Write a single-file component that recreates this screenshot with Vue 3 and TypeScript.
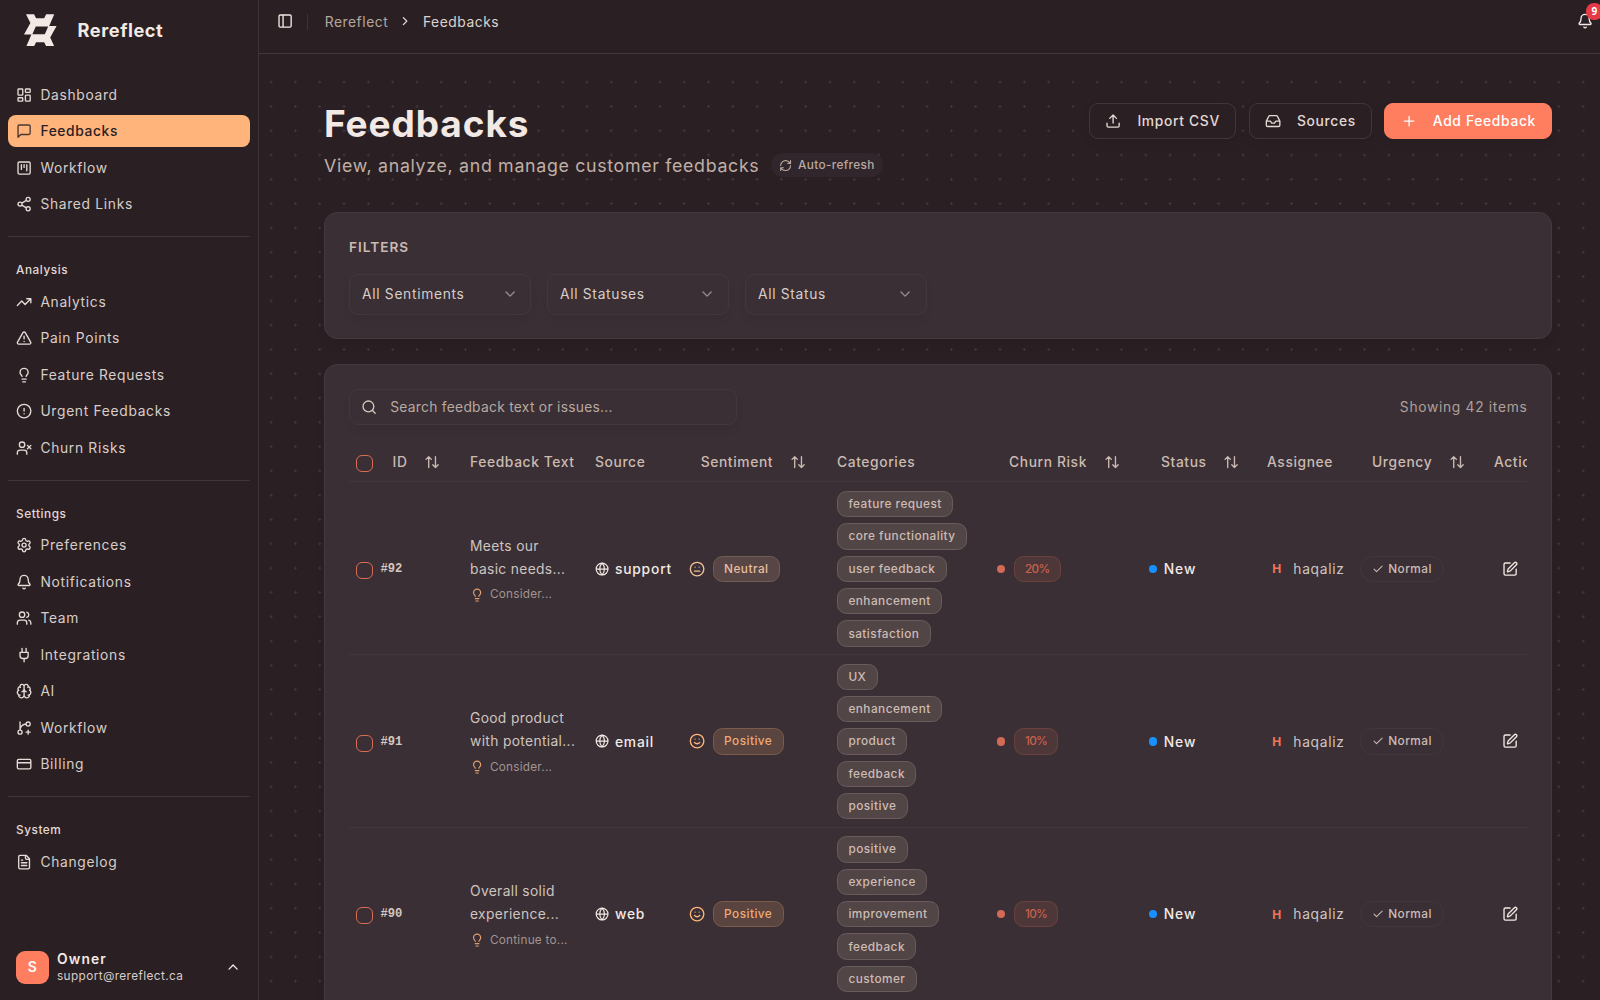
<template>
  <div class="app">
    <aside class="sidebar">
      <div class="brand">
        <svg class="brand-logo" viewBox="0 0 97 97">
          <path
            fill-rule="evenodd"
            d="M6 1h24l6 12h24l6-12h24L75 36h22L78 70l12 26H66l-6-12H36l-6 12H7l15-35H0L19 27ZM35 37 25 60h37l10-23Z"
          />
        </svg>
        <span class="brand-name">Rereflect</span>
      </div>

      <nav class="nav">
        <section v-for="group in navGroups" :key="group.title" class="nav-group">
          <h2 v-if="group.title" class="nav-title">{{ group.title }}</h2>
          <a
            v-for="item in group.items"
            :key="item.label"
            class="nav-item"
            :class="{ active: item.active }"
          >
            <svg class="icon" viewBox="0 0 24 24"><path :d="icons[item.icon]" /></svg>
            <span>{{ item.label }}</span>
          </a>
        </section>
      </nav>

      <div class="user">
        <div class="user-avatar">S</div>
        <div class="user-info">
          <div class="user-name">Owner</div>
          <div class="user-email">support@rereflect.ca</div>
        </div>
        <svg class="icon" viewBox="0 0 24 24"><path :d="icons.chevronUp" /></svg>
      </div>
    </aside>

    <div class="main">
      <header class="topbar">
        <svg class="icon" viewBox="0 0 24 24"><path :d="icons.panel" /></svg>
        <span class="topbar-divider"></span>
        <span class="crumb muted">Rereflect</span>
        <svg class="icon crumb-sep" viewBox="0 0 24 24"><path :d="icons.chevronRight" /></svg>
        <span class="crumb">Feedbacks</span>
        <div class="bell">
          <svg class="icon" viewBox="0 0 24 24"><path :d="icons.bell" /></svg>
          <span class="bell-count">9</span>
        </div>
      </header>

      <main class="content">
        <div class="page-head">
          <div>
            <h1 class="page-title">Feedbacks</h1>
            <div class="page-sub">
              <p>View, analyze, and manage customer feedbacks</p>
              <span class="auto-refresh">
                <svg class="icon" viewBox="0 0 24 24"><path :d="icons.refresh" /></svg>
                <span>Auto-refresh</span>
              </span>
            </div>
          </div>
          <div class="page-actions">
            <button class="btn">
              <svg class="icon" viewBox="0 0 24 24"><path :d="icons.upload" /></svg>
              <span>Import CSV</span>
            </button>
            <button class="btn">
              <svg class="icon" viewBox="0 0 24 24"><path :d="icons.inbox" /></svg>
              <span>Sources</span>
            </button>
            <button class="btn btn-primary">
              <svg class="icon" viewBox="0 0 24 24"><path :d="icons.plus" /></svg>
              <span>Add Feedback</span>
            </button>
          </div>
        </div>

        <section class="card filters">
          <h3 class="filters-title">FILTERS</h3>
          <div class="filters-row">
            <button v-for="name in filters" :key="name" class="select">
              <span>{{ name }}</span>
              <svg class="icon" viewBox="0 0 24 24"><path :d="icons.chevronDown" /></svg>
            </button>
          </div>
        </section>

        <section class="card list">
          <div class="list-bar">
            <label class="search">
              <svg class="icon" viewBox="0 0 24 24"><path :d="icons.search" /></svg>
              <span>Search feedback text or issues...</span>
            </label>
            <span class="showing">Showing 42 items</span>
          </div>

          <div class="table">
            <div class="row head">
              <div class="cell"><span class="checkbox"></span></div>
              <div
                v-for="col in columns"
                :key="col.label"
                class="cell"
                :class="{ sortable: col.sort }"
              >
                <span>{{ col.label }}</span>
                <svg v-if="col.sort" class="icon" viewBox="0 0 24 24"><path :d="icons.sort" /></svg>
              </div>
            </div>

            <div v-for="row in rows" :key="row.id" class="row">
              <div class="cell"><span class="checkbox"></span></div>
              <div class="cell id">#{{ row.id }}</div>
              <div class="cell">
                <div class="feedback">
                  <div v-for="line in row.text" :key="line">{{ line }}</div>
                  <div class="hint">
                    <svg class="icon" viewBox="0 0 24 24"><path :d="icons.bulb" /></svg>
                    <span>{{ row.hint }}</span>
                  </div>
                </div>
              </div>
              <div class="cell source">
                <svg class="icon" viewBox="0 0 24 24"><path :d="icons.globe" /></svg>
                <span>{{ row.source }}</span>
              </div>
              <div class="cell sentiment" :class="row.sentiment.toLowerCase()">
                <svg class="icon" viewBox="0 0 24 24">
                  <path :d="row.sentiment === 'Positive' ? icons.smile : icons.meh" />
                </svg>
                <span class="badge">{{ row.sentiment }}</span>
              </div>
              <div class="cell tags">
                <span v-for="tag in row.tags" :key="tag" class="badge">{{ tag }}</span>
              </div>
              <div class="cell churn">
                <span class="dot"></span>
                <span class="badge">{{ row.churn }}%</span>
              </div>
              <div class="cell status">
                <span class="dot"></span>
                <span>New</span>
              </div>
              <div class="cell assignee">
                <span class="initial">H</span>
                <span>haqaliz</span>
              </div>
              <div class="cell urgency">
                <span class="badge">
                  <svg class="icon" viewBox="0 0 24 24"><path :d="icons.check" /></svg>
                  <span>Normal</span>
                </span>
              </div>
              <div class="cell actions">
                <svg class="icon" viewBox="0 0 24 24"><path :d="icons.edit" /></svg>
              </div>
            </div>
          </div>
        </section>
      </main>
    </div>
  </div>
</template>

<script setup lang="ts">
interface NavItem {
  label: string
  icon: string
  active?: boolean
}

interface NavGroup {
  title: string
  items: NavItem[]
}

interface FeedbackRow {
  id: number
  text: string[]
  hint: string
  source: string
  sentiment: 'Neutral' | 'Positive'
  tags: string[]
  churn: number
}

const icons: Record<string, string> = {
  dashboard:
    'M4 3h5a1 1 0 0 1 1 1v7a1 1 0 0 1-1 1H4a1 1 0 0 1-1-1V4a1 1 0 0 1 1-1ZM15 3h5a1 1 0 0 1 1 1v3a1 1 0 0 1-1 1h-5a1 1 0 0 1-1-1V4a1 1 0 0 1 1-1ZM15 12h5a1 1 0 0 1 1 1v7a1 1 0 0 1-1 1h-5a1 1 0 0 1-1-1v-7a1 1 0 0 1 1-1ZM4 16h5a1 1 0 0 1 1 1v3a1 1 0 0 1-1 1H4a1 1 0 0 1-1-1v-3a1 1 0 0 1 1-1Z',
  message: 'M21 15a2 2 0 0 1-2 2H7l-4 4V5a2 2 0 0 1 2-2h14a2 2 0 0 1 2 2z',
  kanban:
    'M5 3h14a2 2 0 0 1 2 2v14a2 2 0 0 1-2 2H5a2 2 0 0 1-2-2V5a2 2 0 0 1 2-2ZM8 7v7M12 7v4M16 7v9',
  share:
    'M21 5a3 3 0 1 1-6 0 3 3 0 0 1 6 0ZM9 12a3 3 0 1 1-6 0 3 3 0 0 1 6 0ZM21 19a3 3 0 1 1-6 0 3 3 0 0 1 6 0ZM8.59 13.51l6.83 3.98M15.41 6.51l-6.82 3.98',
  trending: 'M16 7h6v6M22 7l-8.5 8.5-5-5L2 17',
  warning:
    'm21.73 18-8-14a2 2 0 0 0-3.48 0l-8 14A2 2 0 0 0 4 21h16a2 2 0 0 0 1.73-3M12 9v4M12 17h.01',
  bulb: 'M15 14c.2-1 .7-1.7 1.5-2.5 1-.9 1.5-2.2 1.5-3.5A6 6 0 0 0 6 8c0 1 .2 2.2 1.5 3.5.7.7 1.3 1.5 1.5 2.5M9 18h6M10 22h4',
  alert: 'M22 12a10 10 0 1 1-20 0 10 10 0 0 1 20 0ZM12 8v4M12 16h.01',
  userX:
    'M16 21v-2a4 4 0 0 0-4-4H6a4 4 0 0 0-4 4v2M13 7a4 4 0 1 1-8 0 4 4 0 0 1 8 0ZM17 8l5 5M22 8l-5 5',
  settings:
    'M9.671 4.136a2.34 2.34 0 0 1 4.659 0 2.34 2.34 0 0 0 3.319 1.915 2.34 2.34 0 0 1 2.33 4.033 2.34 2.34 0 0 0 0 3.831 2.34 2.34 0 0 1-2.33 4.033 2.34 2.34 0 0 0-3.319 1.915 2.34 2.34 0 0 1-4.659 0 2.34 2.34 0 0 0-3.32-1.915 2.34 2.34 0 0 1-2.33-4.033 2.34 2.34 0 0 0 0-3.831A2.34 2.34 0 0 1 6.35 6.051a2.34 2.34 0 0 0 3.319-1.915M15 12a3 3 0 1 1-6 0 3 3 0 0 1 6 0Z',
  bell: 'M10.268 21a2 2 0 0 0 3.464 0M3.262 15.326A1 1 0 0 0 4 17h16a1 1 0 0 0 .74-1.673C19.41 13.956 18 12.499 18 8A6 6 0 0 0 6 8c0 4.499-1.411 5.956-2.738 7.326',
  users:
    'M16 21v-2a4 4 0 0 0-4-4H6a4 4 0 0 0-4 4v2M16 3.128a4 4 0 0 1 0 7.744M22 21v-2a4 4 0 0 0-3-3.87M13 7a4 4 0 1 1-8 0 4 4 0 0 1 8 0Z',
  plug: 'M12 22v-5M9 8V2M15 8V2M18 8v5a4 4 0 0 1-4 4h-4a4 4 0 0 1-4-4V8Z',
  brain:
    'M12 18V5M15 13a4.17 4.17 0 0 1-3-4 4.17 4.17 0 0 1-3 4M17.598 6.5A3 3 0 1 0 12 5a3 3 0 1 0-5.598 1.5M17.997 5.125a4 4 0 0 1 2.526 5.77M18 18a4 4 0 0 0 2-7.464M19.967 17.483A4 4 0 1 1 12 18a4 4 0 1 1-7.967-.517M6 18a4 4 0 0 1-2-7.464M6.003 5.125a4 4 0 0 0-2.526 5.77',
  branch:
    'M6 3v12M18 9a3 3 0 1 0 0-6 3 3 0 0 0 0 6zM6 21a3 3 0 1 0 0-6 3 3 0 0 0 0 6zM15 6a9 9 0 0 0-9 9M18 15v6M21 18h-6',
  card: 'M4 5h16a2 2 0 0 1 2 2v10a2 2 0 0 1-2 2H4a2 2 0 0 1-2-2V7a2 2 0 0 1 2-2ZM2 10h20',
  file: 'M15 2H6a2 2 0 0 0-2 2v16a2 2 0 0 0 2 2h12a2 2 0 0 0 2-2V7ZM14 2v4a2 2 0 0 0 2 2h4M10 9H8M16 13H8M16 17H8',
  panel: 'M5 3h14a2 2 0 0 1 2 2v14a2 2 0 0 1-2 2H5a2 2 0 0 1-2-2V5a2 2 0 0 1 2-2ZM9 3v18',
  upload: 'M12 3v12M17 8l-5-5-5 5M21 15v4a2 2 0 0 1-2 2H5a2 2 0 0 1-2-2v-4',
  inbox:
    'M22 12h-6l-2 3h-4l-2-3H2M5.45 5.11 2 12v6a2 2 0 0 0 2 2h16a2 2 0 0 0 2-2v-6l-3.45-6.89A2 2 0 0 0 16.76 4H7.24a2 2 0 0 0-1.79 1.11z',
  plus: 'M5 12h14M12 5v14',
  refresh:
    'M3 12a9 9 0 0 1 9-9 9.75 9.75 0 0 1 6.74 2.74L21 8M21 3v5h-5M21 12a9 9 0 0 1-9 9 9.75 9.75 0 0 1-6.74-2.74L3 16M8 16H3v5',
  search: 'M19 11a8 8 0 1 1-16 0 8 8 0 0 1 16 0ZM21 21l-4.34-4.34',
  sort: 'm21 16-4 4-4-4M17 20V4M3 8l4-4 4 4M7 4v16',
  globe:
    'M22 12a10 10 0 1 1-20 0 10 10 0 0 1 20 0ZM12 2a14.5 14.5 0 0 0 0 20 14.5 14.5 0 0 0 0-20M2 12h20',
  smile: 'M22 12a10 10 0 1 1-20 0 10 10 0 0 1 20 0ZM8 14s1.5 2 4 2 4-2 4-2M9 9h.01M15 9h.01',
  meh: 'M22 12a10 10 0 1 1-20 0 10 10 0 0 1 20 0ZM8 15h8M9 9h.01M15 9h.01',
  check: 'M20 6 9 17l-5-5',
  edit: 'M12 3H5a2 2 0 0 0-2 2v14a2 2 0 0 0 2 2h14a2 2 0 0 0 2-2v-7M18.375 2.625a1 1 0 0 1 3 3l-9.013 9.014a2 2 0 0 1-.853.505l-2.873.84a.5.5 0 0 1-.62-.62l.84-2.873a2 2 0 0 1 .506-.852z',
  chevronUp: 'm18 15-6-6-6 6',
  chevronDown: 'm6 9 6 6 6-6',
  chevronRight: 'm9 18 6-6-6-6',
}

const navGroups: NavGroup[] = [
  {
    title: '',
    items: [
      { label: 'Dashboard', icon: 'dashboard' },
      { label: 'Feedbacks', icon: 'message', active: true },
      { label: 'Workflow', icon: 'kanban' },
      { label: 'Shared Links', icon: 'share' },
    ],
  },
  {
    title: 'Analysis',
    items: [
      { label: 'Analytics', icon: 'trending' },
      { label: 'Pain Points', icon: 'warning' },
      { label: 'Feature Requests', icon: 'bulb' },
      { label: 'Urgent Feedbacks', icon: 'alert' },
      { label: 'Churn Risks', icon: 'userX' },
    ],
  },
  {
    title: 'Settings',
    items: [
      { label: 'Preferences', icon: 'settings' },
      { label: 'Notifications', icon: 'bell' },
      { label: 'Team', icon: 'users' },
      { label: 'Integrations', icon: 'plug' },
      { label: 'AI', icon: 'brain' },
      { label: 'Workflow', icon: 'branch' },
      { label: 'Billing', icon: 'card' },
    ],
  },
  {
    title: 'System',
    items: [{ label: 'Changelog', icon: 'file' }],
  },
]

const filters = ['All Sentiments', 'All Statuses', 'All Status']

const columns = [
  { label: 'ID', sort: true },
  { label: 'Feedback Text' },
  { label: 'Source' },
  { label: 'Sentiment', sort: true },
  { label: 'Categories' },
  { label: 'Churn Risk', sort: true },
  { label: 'Status', sort: true },
  { label: 'Assignee' },
  { label: 'Urgency', sort: true },
  { label: 'Actions' },
]

const rows: FeedbackRow[] = [
  {
    id: 92,
    text: ['Meets our', 'basic needs...'],
    hint: 'Consider...',
    source: 'support',
    sentiment: 'Neutral',
    tags: ['feature request', 'core functionality', 'user feedback', 'enhancement', 'satisfaction'],
    churn: 20,
  },
  {
    id: 91,
    text: ['Good product', 'with potential...'],
    hint: 'Consider...',
    source: 'email',
    sentiment: 'Positive',
    tags: ['UX', 'enhancement', 'product', 'feedback', 'positive'],
    churn: 10,
  },
  {
    id: 90,
    text: ['Overall solid', 'experience...'],
    hint: 'Continue to...',
    source: 'web',
    sentiment: 'Positive',
    tags: ['positive', 'experience', 'improvement', 'feedback', 'customer'],
    churn: 10,
  },
]
</script>

<style>
body {
  background: #2a2024;
}
</style>

<style scoped>
.app {
  --bg: #2a2024;
  --card: #392f35;
  --fg: #f2e9e4;
  --muted: #d7c6bc;
  --primary: #ff7e5f;
  --accent: #feb47b;
  --border: #463a41;
  display: flex;
  width: 100%;
  height: 1000px;
  overflow: hidden;
  background: var(--bg);
  color: var(--fg);
  font-family: Inter, 'Noto Sans', sans-serif;
  font-size: 13.8px;
  letter-spacing: 0.04em;
  white-space: nowrap;
}
.app * {
  box-sizing: border-box;
}
h1,
h2,
h3,
p {
  margin: 0;
}
button {
  font: inherit;
  letter-spacing: inherit;
  color: inherit;
}
.icon {
  width: 16.2px;
  height: 16.2px;
  flex: none;
  fill: none;
  stroke: currentColor;
  stroke-width: 2;
  stroke-linecap: round;
  stroke-linejoin: round;
}

/* sidebar */
.sidebar {
  display: flex;
  flex-direction: column;
  flex: none;
  width: 259px;
  border-right: 1px solid #3d3238;
}
.brand {
  display: flex;
  align-items: center;
  height: 60px;
  padding-left: 24px;
  gap: 21px;
}
.brand-logo {
  width: 32.6px;
  height: 32.6px;
  fill: var(--fg);
}
.brand-name {
  font-size: 18.2px;
  font-weight: 700;
  letter-spacing: 0.03em;
}
.nav {
  flex: 1;
  padding: 18.6px 8px 0;
}
.nav-group {
  padding-bottom: 16px;
}
.nav-group + .nav-group {
  border-top: 1px solid #3f343a;
  padding-top: 16px;
}
.nav-title {
  display: flex;
  align-items: center;
  height: 32.4px;
  padding: 1px 0 0 8px;
  font-size: 11.8px;
  font-weight: 500;
  color: #e2d8d3;
}
.nav-item {
  display: flex;
  align-items: center;
  height: 32.4px;
  margin-bottom: 4.05px;
  padding-left: 8.2px;
  gap: 8px;
  border-radius: 8px;
  color: #d8cdc8;
  letter-spacing: 0.05em;
}
.nav-item .icon {
  color: #e6dcd7;
}
.nav-item:last-child {
  margin-bottom: 0;
}
.nav-item.active {
  background: var(--accent);
  color: var(--bg);
  font-weight: 500;
  letter-spacing: 0.045em;
}
.nav-item.active .icon {
  color: #4a3733;
}
.user {
  display: flex;
  align-items: center;
  padding: 0 17px 15.6px 16px;
}
.user-avatar {
  display: flex;
  align-items: center;
  justify-content: center;
  width: 33px;
  height: 33px;
  border-radius: 9px;
  background: var(--primary);
  color: #fff;
  font-weight: 600;
}
.user-info {
  flex: 1;
  padding-left: 8px;
}
.user-name {
  padding-top: 1px;
  font-weight: 600;
  line-height: 17px;
  letter-spacing: 0.08em;
}
.user-email {
  font-size: 11.8px;
  line-height: 16px;
  color: #d8cdc8;
  letter-spacing: 0.033em;
}

/* top bar */
.main {
  display: flex;
  flex-direction: column;
  flex: 1;
  min-width: 0;
}
.topbar {
  display: flex;
  align-items: center;
  flex: none;
  height: 54px;
  padding: 0 7px 10px 18px;
  border-bottom: 1px solid #43373d;
}
.topbar-divider {
  width: 1px;
  height: 16px;
  margin: 0 16.5px 0 14px;
  background: #3d3238;
}
.crumb.muted {
  color: #b5a59d;
}
.crumb {
  color: #ddd3ce;
}
.crumb-sep {
  width: 14.2px;
  height: 14.2px;
  margin: 0 11px 0 9.5px;
}
.bell {
  position: relative;
  display: flex;
  margin-left: auto;
}
.bell-count {
  position: absolute;
  top: -10px;
  left: 9.5px;
  width: 16.2px;
  height: 16.2px;
  border-radius: 50%;
  background: #e63946;
  color: #fff;
  font: 700 10px/16.2px 'Noto Sans', sans-serif;
  letter-spacing: 0;
  text-align: center;
}

/* page */
.content {
  flex: 1;
  min-height: 0;
  margin-top: 16px;
  padding: 32.7px 47.6px 0 65px;
  background-image: radial-gradient(circle, #43373e 1px, transparent 1px);
  background-size: 24.3px 24.3px;
  overflow: hidden;
}
.page-head {
  display: flex;
  justify-content: space-between;
  height: 109.6px;
}
.page-title {
  font-size: 37px;
  line-height: 41px;
  font-weight: 700;
  letter-spacing: 0.025em;
}
.page-sub {
  display: flex;
  align-items: center;
  height: 28px;
  margin-top: 7.5px;
  gap: 12px;
}
.page-sub p {
  font-size: 17.8px;
  letter-spacing: 0.038em;
  color: #c0afa6;
}
.auto-refresh {
  display: flex;
  align-items: center;
  height: 24px;
  padding: 0 8px;
  gap: 5.5px;
  border-radius: 12px;
  background: #30262b;
  color: #b9a9a1;
  font-size: 11.8px;
  font-weight: 500;
  letter-spacing: 0.03em;
}
.auto-refresh .icon {
  width: 13.2px;
  height: 13.2px;
}
.page-actions {
  display: flex;
  gap: 12.2px;
}
.btn {
  display: flex;
  align-items: center;
  height: 36.5px;
  padding: 0 15.4px;
  gap: 15.8px;
  border: 1px solid #41363c;
  border-radius: 9px;
  background: var(--bg);
  color: #e2d8d3;
  font-weight: 500;
  letter-spacing: 0.05em;
  box-shadow: 0 4px 12px -3px rgba(0, 0, 0, 0.14);
}
.btn-primary {
  border-color: var(--primary);
  background: var(--primary);
  color: #fff;
}
.card {
  border: 1px solid #44393f;
  border-radius: 13px;
  background: var(--card);
  box-shadow: 0 6px 12px -3px rgba(0, 0, 0, 0.12);
}
.filters {
  height: 126.7px;
  padding: 24px;
}
.filters-title {
  font-size: 13.6px;
  line-height: 21px;
  font-weight: 600;
  color: #cbbab1;
  letter-spacing: 0.075em;
}
.filters-row {
  display: flex;
  margin-top: 16px;
  gap: 16.3px;
}
.select {
  display: flex;
  align-items: center;
  justify-content: space-between;
  width: 181.7px;
  height: 40.3px;
  padding: 0 12px;
  border: 1px solid #42373d;
  border-radius: 9px;
  background: transparent;
  color: #d8cdc8;
  letter-spacing: 0.05em;
  box-shadow: 0 6px 12px -3px rgba(0, 0, 0, 0.07);
}
.select .icon {
  color: #9a8e8c;
}
.list {
  height: 700px;
  margin-top: 25px;
  padding: 24px;
}
.list-bar {
  display: flex;
  align-items: center;
  justify-content: space-between;
  height: 36.5px;
}
.search {
  display: flex;
  align-items: center;
  width: 387.8px;
  height: 36.5px;
  padding-left: 11px;
  gap: 13px;
  border: 1px solid #42373d;
  border-radius: 9px;
  color: #b8a8a0;
  letter-spacing: 0.02em;
  box-shadow: 0 6px 12px -3px rgba(0, 0, 0, 0.07);
}
.search .icon {
  color: var(--muted);
}
.showing {
  color: #b0a099;
  letter-spacing: 0.05em;
}

/* table */
.table {
  margin-top: 16px;
  overflow: hidden;
}
.row {
  display: grid;
  grid-template-columns: 31.5px 89.5px 125px 93.7px 148.3px 160px 152px 118px 93px 134px 76px;
  width: 1221px;
  height: 172.7px;
  padding-top: 1px;
  border-bottom: 1px solid #42373d;
}
.row.head {
  height: 41px;
  color: #cbbab1;
  font-weight: 500;
  letter-spacing: 0.045em;
}
.cell {
  display: flex;
  align-items: center;
}
.sortable {
  padding-left: 12px;
  gap: 16.8px;
}
.checkbox {
  width: 17px;
  height: 17px;
  margin: 3px 0 0 7px;
  border: 1px solid #d96c54;
  border-radius: 6px;
}
.id {
  font: 700 12.15px 'Liberation Mono', monospace;
  letter-spacing: 0;
  color: var(--muted);
}
.feedback {
  line-height: 23px;
  color: #cfc4bf;
  letter-spacing: 0.025em;
}
.hint {
  display: flex;
  align-items: center;
  height: 16.2px;
  margin-top: 6px;
  gap: 5.7px;
  font-size: 11.8px;
  letter-spacing: 0.02em;
  color: #a2948e;
}
.hint .icon {
  width: 14.2px;
  height: 14.2px;
  color: #e0a06f;
}
.source {
  gap: 5.7px;
  font-weight: 500;
  letter-spacing: 0.06em;
}
.source .icon {
  width: 14.2px;
  height: 14.2px;
}
.badge {
  display: flex;
  align-items: center;
  height: 26.3px;
  padding: 0 10.4px;
  border: 1px solid #6a5c5c;
  border-radius: 9.5px;
  background: #524546;
  color: #cdbcb3;
  font-size: 11.8px;
  font-weight: 500;
  letter-spacing: 0.04em;
}
.sentiment {
  gap: 7.8px;
}
.sentiment.positive {
  color: var(--accent);
}
.sentiment.positive .badge {
  border-color: #7c5b4c;
  background: #594440;
  color: #f0a973;
}
.sentiment.neutral {
  color: #f3c19b;
}
.sentiment.neutral .badge {
  border-color: #725c54;
  background: #574645;
  color: #ebbd9c;
}
.tags {
  flex-direction: column;
  align-items: flex-start;
  justify-content: center;
  gap: 6.1px;
}
.dot {
  width: 8.2px;
  height: 8.2px;
  border-radius: 50%;
}
.churn {
  gap: 8.4px;
}
.churn .dot {
  background: #d36a57;
}
.churn .badge {
  border-color: #6d423e;
  background: #4e3738;
  color: #c5624f;
  letter-spacing: -0.06em;
}
.status {
  gap: 6.5px;
  font-weight: 500;
  letter-spacing: 0.07em;
}
.status .dot {
  background: #1890ff;
}
.assignee {
  gap: 6px;
  color: #d0c5c0;
  letter-spacing: 0.05em;
}
.initial {
  width: 20.3px;
  color: #ef7659;
  font-size: 12px;
  font-weight: 700;
  text-align: center;
}
.urgency .badge {
  padding: 0 11px;
  gap: 4px;
  border-color: #42373d;
  border-radius: 13px;
  background: transparent;
}
.urgency .icon {
  width: 12.2px;
  height: 12.2px;
}
.actions {
  padding-left: 8px;
}
</style>
